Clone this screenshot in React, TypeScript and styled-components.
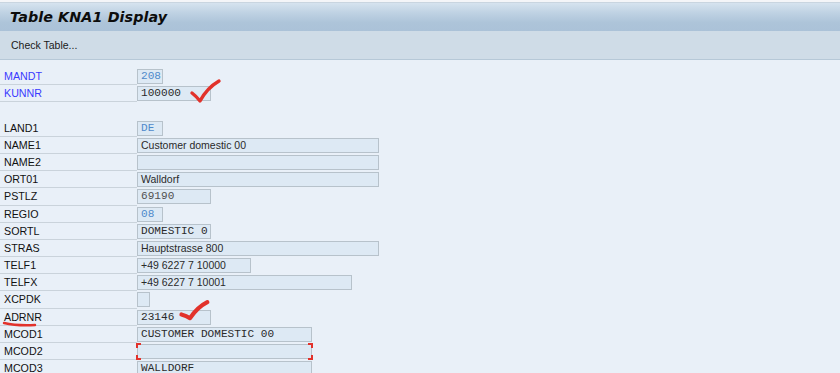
import React from 'react';
import styled, { createGlobalStyle } from 'styled-components';

// Field definitions for the KNA1 display
type FieldFont = 'mono' | 'sans';
type Tone = 'plain' | 'key' | 'muted';

interface FieldRow {
  name: string;
  value?: string;
  width: number;
  font: FieldFont;
  tone?: Tone;
  keyField?: boolean;
  mark?: 'check' | 'adrnr' | 'bracket';
}

const rows: (FieldRow | null)[] = [
  { name: 'MANDT', value: '208', width: 26, font: 'mono', tone: 'key', keyField: true },
  { name: 'KUNNR', value: '100000', width: 74, font: 'mono', keyField: true, mark: 'check' },
  null,
  { name: 'LAND1', value: 'DE', width: 26, font: 'mono', tone: 'key' },
  { name: 'NAME1', value: 'Customer domestic 00', width: 242, font: 'sans' },
  { name: 'NAME2', value: '', width: 242, font: 'sans' },
  { name: 'ORT01', value: 'Walldorf', width: 242, font: 'sans' },
  { name: 'PSTLZ', value: '69190', width: 74, font: 'mono', tone: 'muted' },
  { name: 'REGIO', value: '08', width: 26, font: 'mono', tone: 'key' },
  { name: 'SORTL', value: 'DOMESTIC 0', width: 74, font: 'mono' },
  { name: 'STRAS', value: 'Hauptstrasse 800', width: 242, font: 'sans' },
  { name: 'TELF1', value: '+49 6227 7 10000', width: 114, font: 'sans' },
  { name: 'TELFX', value: '+49 6227 7 10001', width: 215, font: 'sans' },
  { name: 'XCPDK', value: '', width: 13, font: 'sans' },
  { name: 'ADRNR', value: '23146', width: 74, font: 'mono', mark: 'adrnr' },
  { name: 'MCOD1', value: 'CUSTOMER DOMESTIC 00', width: 175, font: 'mono' },
  { name: 'MCOD2', value: '', width: 175, font: 'mono', mark: 'bracket' },
  { name: 'MCOD3', value: 'WALLDORF', width: 175, font: 'mono' },
];

const toneColor: Record<Tone, string> = {
  plain: '#2a2a2a',
  key: '#4f8acb',
  muted: '#505050',
};

const App: React.FC = () => (
  <>
    <GlobalStyle />
    <Page>
      <TopStrip />
      <TitleBar>
        <Title>Table KNA1 Display</Title>
      </TitleBar>
      <Toolbar>
        <ToolButton>Check Table...</ToolButton>
      </Toolbar>
      <Form>
        {rows.map((row, i) =>
          row ? (
            <Row key={row.name}>
              <Label keyField={!!row.keyField}>
                {row.name}
                {row.mark === 'adrnr' && (
                  <Underline viewBox="0 0 34 6">
                    <path d="M1 2 Q14 5 32 4" />
                  </Underline>
                )}
              </Label>
              <FieldCell>
                <Field
                  style={{ width: row.width }}
                  font={row.font}
                  tone={row.tone || 'plain'}
                >
                  {row.value}
                </Field>
                {row.mark === 'check' && (
                  <Check viewBox="0 0 32 26" style={{ left: 53, top: -6 }}>
                    <path d="M2 14 Q6 17 10 22 Q17 9 29 2" />
                  </Check>
                )}
                {row.mark === 'adrnr' && (
                  <Check viewBox="0 0 26 20" style={{ left: 42, top: -10 }}>
                    <path d="M2 12 Q6 13 9 15 Q15 6 23 2" />
                  </Check>
                )}
                {row.mark === 'bracket' && <Brackets style={{ width: row.width + 2 }} />}
              </FieldCell>
            </Row>
          ) : (
            <BlankRow key={`blank-${i}`} />
          )
        )}
      </Form>
    </Page>
  </>
);

const GlobalStyle = createGlobalStyle`
  html, body {
    margin: 0;
    padding: 0;
    background: #e9f0f8;
  }
  body {
    font-family: 'Liberation Sans', Arial, sans-serif;
  }
`;

const Page = styled.div`
  width: 840px;
  height: 373px;
  overflow: hidden;
  background: #e9f0f8;
`;

const TopStrip = styled.div`
  height: 3px;
  background: #f4f5f8;
  border-bottom: 1px solid #c9d5e0;
  box-sizing: border-box;
`;

const TitleBar = styled.div`
  height: 28px;
  display: flex;
  align-items: center;
  padding-left: 10px;
  background: linear-gradient(to bottom, #d6e3ef 0%, #bfd2e3 35%, #adc4d9 70%, #abc2d8 100%);
`;

const Title = styled.h1`
  margin: 0;
  font-family: 'DejaVu Sans', Verdana, sans-serif;
  font-size: 14.3px;
  font-weight: bold;
  font-style: italic;
  color: #0c0c0c;
  letter-spacing: 0.1px;
`;

const Toolbar = styled.div`
  height: 29px;
  display: flex;
  align-items: center;
  padding-left: 11px;
  background: #cfdce7;
  border-bottom: 1px solid #b6c8d7;
  box-sizing: border-box;
`;

const ToolButton = styled.span`
  font-size: 10.5px;
  color: #1a1a1a;
`;

const Form = styled.div`
  padding-top: 8px;
  display: flex;
  flex-direction: column;
`;

const Row = styled.div`
  height: 17.2px;
  display: grid;
  grid-template-columns: 137px 1fr;
`;

const BlankRow = styled.div`
  height: 17.2px;
`;

const Label = styled.div<{ keyField: boolean }>`
  position: relative;
  padding-left: 4px;
  font-size: 10.7px;
  line-height: 16px;
  color: ${(p) => (p.keyField ? '#3a3aff' : '#111')};
  border-bottom: 1px solid #cad3db;
  box-sizing: border-box;
`;

const FieldCell = styled.div`
  position: relative;
  padding-top: 1px;
`;

const Field = styled.div<{ font: FieldFont; tone: Tone }>`
  height: 15px;
  box-sizing: border-box;
  border: 1px solid #b7c2cb;
  background: #dde9f4;
  padding-left: 3px;
  white-space: pre;
  overflow: hidden;
  color: ${(p) => toneColor[p.tone]};
  font-family: ${(p) =>
    p.font === 'mono' ? "'Liberation Mono', 'Courier New', monospace" : "'Liberation Sans', Arial, sans-serif"};
  font-size: ${(p) => (p.font === 'mono' ? '11.1px' : '10.5px')};
  line-height: 13px;
`;

const Check = styled.svg`
  position: absolute;
  width: 32px;
  height: 26px;
  overflow: visible;
  fill: none;
  stroke: #e2322b;
  stroke-width: 3.4;
  stroke-linecap: round;
  stroke-linejoin: round;
`;

const Underline = styled.svg`
  position: absolute;
  left: 3px;
  top: 12px;
  width: 34px;
  height: 6px;
  overflow: visible;
  fill: none;
  stroke: #e2322b;
  stroke-width: 2.4;
  stroke-linecap: round;
`;

const Brackets = styled.div`
  position: absolute;
  left: -1px;
  top: 0;
  height: 17px;
  box-sizing: border-box;
  pointer-events: none;
  background:
    linear-gradient(#e2322b, #e2322b) left top / 5px 2px no-repeat,
    linear-gradient(#e2322b, #e2322b) left top / 2px 5px no-repeat,
    linear-gradient(#e2322b, #e2322b) right top / 5px 2px no-repeat,
    linear-gradient(#e2322b, #e2322b) right top / 2px 5px no-repeat,
    linear-gradient(#e2322b, #e2322b) left bottom / 5px 2px no-repeat,
    linear-gradient(#e2322b, #e2322b) left bottom / 2px 5px no-repeat,
    linear-gradient(#e2322b, #e2322b) right bottom / 5px 2px no-repeat,
    linear-gradient(#e2322b, #e2322b) right bottom / 2px 5px no-repeat;
`;

export default App;
